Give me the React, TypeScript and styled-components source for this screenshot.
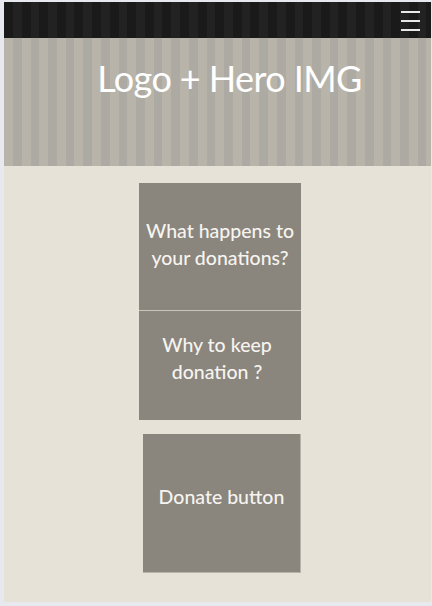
import React from 'react';
import styled, { createGlobalStyle } from 'styled-components';

const GlobalStyle = createGlobalStyle`
	html, body {
		margin: 0;
		padding: 0;
		background: #e8e9ee;
	}

	body {
		padding: 2px 1px 4px 4px;
		font-family: Lato, "Noto Sans", sans-serif;
	}
`;

const Page = styled.div`
	width: 427px;
	display: flex;
	flex-direction: column;
	background: #e6e2d8;
`;

const TopBar = styled.header`
	height: 36px;
	display: flex;
	align-items: center;
	justify-content: flex-end;
	padding-right: 11px;
	background: repeating-linear-gradient(90deg, #1a1a1a 0 9px, #222222 9px 17.6px);
`;

const MenuButton = styled.button`
	width: 19px;
	height: 20px;
	padding: 0;
	border: 0;
	background: transparent;
	display: flex;
	flex-direction: column;
	justify-content: space-between;
	cursor: pointer;
	margin-top: 1px;

	span {
		display: block;
		height: 2px;
		background: #e9e9e9;
	}
`;

const Hero = styled.section`
	height: 128px;
	display: flex;
	justify-content: center;
	padding-left: 24px;
	box-sizing: border-box;
	background: repeating-linear-gradient(90deg, #b8b4a9 0 9px, #adaaa4 9px 17.6px);
`;

const HeroTitle = styled.h1`
	margin: 18px 0 0;
	font-size: 36px;
	font-weight: 400;
	color: #ffffff;
	letter-spacing: -0.6px;
`;

const Main = styled.main`
	height: 436px;
	display: flex;
	flex-direction: column;
	align-items: flex-start;
	padding: 17px 0 0 135px;
	box-sizing: border-box;
`;

const InfoStack = styled.div`
	display: flex;
	flex-direction: column;
	gap: 1px;
	background: #c9c5bb;
`;

const Tile = styled.div<{ $w: number; $h: number; $shift?: number; $lift?: number }>`
	width: ${p => p.$w}px;
	height: ${p => p.$h}px;
	margin-left: ${p => p.$shift || 0}px;
	padding-bottom: ${p => p.$lift || 0}px;
	display: flex;
	align-items: center;
	justify-content: center;
	box-sizing: border-box;
	background: #8a857d;
	color: #f6f4ef;
	font-size: 19.5px;
	font-weight: 500;
	line-height: 27px;
	text-align: center;
	white-space: pre-line;
`;

const DonateButton = styled(Tile).attrs({ as: 'button' })`
	margin-top: 14px;
	border: 0;
	border-right: 1px solid #b7b3aa;
	border-bottom: 1px solid #b7b3aa;
	font-family: inherit;
	cursor: pointer;
`;

const App = () => (
	<>
		<GlobalStyle />
		<Page>
			<TopBar>
				<MenuButton aria-label='menu'>
					<span />
					<span />
					<span />
				</MenuButton>
			</TopBar>
			<Hero>
				<HeroTitle>Logo + Hero IMG</HeroTitle>
			</Hero>
			<Main>
				<InfoStack>
					<Tile $w={162} $h={127} $lift={6}>{'What happens to\n your donations?'}</Tile>
					<Tile $w={162} $h={109} $lift={15} style={{ paddingRight: 6 }}>{'Why to keep\n donation ?'}</Tile>
				</InfoStack>
				<DonateButton $w={158} $h={139} $shift={4} $lift={15}>Donate button</DonateButton>
			</Main>
		</Page>
	</>
);

export default App;
